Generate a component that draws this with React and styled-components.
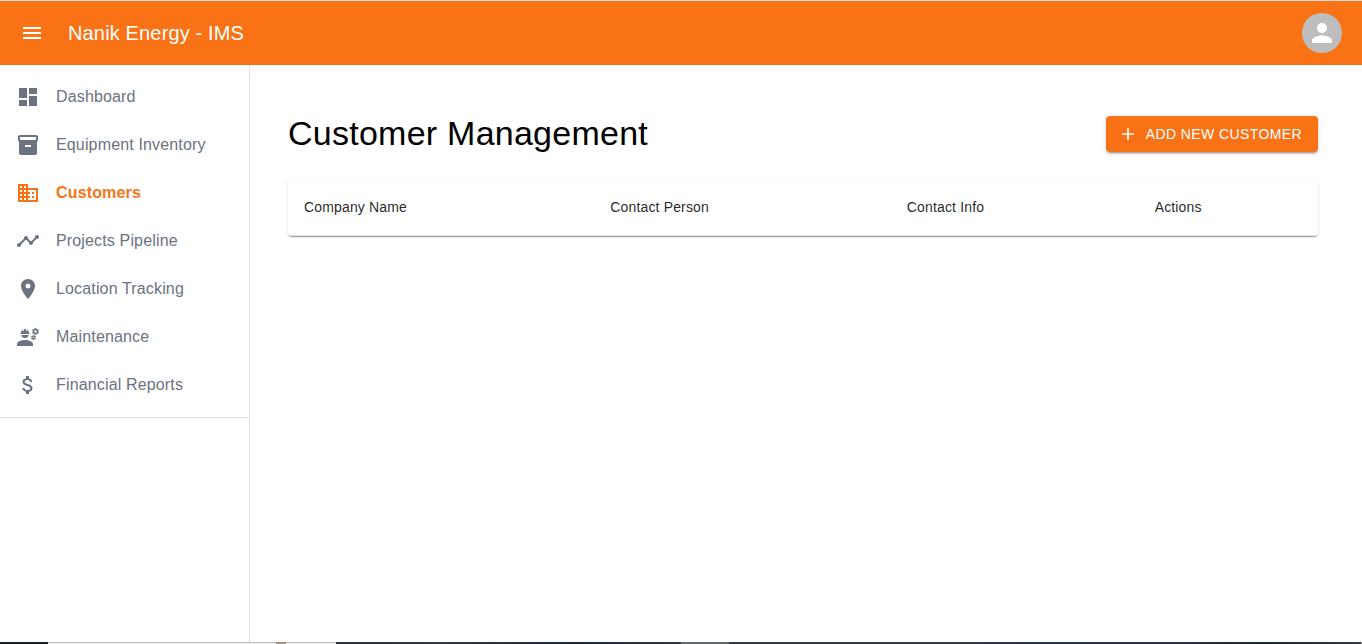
import React from "react";
import styled, { createGlobalStyle } from "styled-components";
import {
  MdMenu, MdDashboard, MdInventory2, MdBusiness, MdTimeline,
  MdLocationOn, MdEngineering, MdAttachMoney, MdPerson, MdAdd,
} from "react-icons/md";

const GlobalStyle = createGlobalStyle`
  *, *::before, *::after { box-sizing: border-box; }
  body {
    margin: 0;
    background: #fff;
    font-family: "Liberation Sans", Arial, sans-serif;
    overflow: hidden;
  }
`;

const Page = styled.div`
  display: flex;
  flex-direction: column;
  width: 100%;
  height: 100vh;
`;

const AppBar = styled.header`
  display: flex;
  align-items: center;
  height: 65px;
  flex: none;
  padding: 0 20px;
  color: #fff;
  background: #f97316;
  border-top: 1px solid #d5dadd;
`;

const MenuButton = styled.button`
  display: flex;
  padding: 0;
  border: 0;
  color: inherit;
  background: none;
  font-size: 24px;
`;

const Brand = styled.div`
  flex: 1;
  margin-left: 24px;
  font-size: 20px;
  line-height: 32px;
  letter-spacing: 0.0075em;
`;

const Avatar = styled.div`
  display: flex;
  align-items: center;
  justify-content: center;
  width: 40px;
  height: 40px;
  border-radius: 50%;
  background: #bdbdbd;
  font-size: 30px;
`;

const Body = styled.div`
  display: flex;
  flex: 1;
  min-height: 0;
`;

const Sidebar = styled.aside`
  width: 250px;
  flex: none;
  border-right: 1px solid #e0e0e0;
`;

const NavList = styled.nav`
  padding: 8px 0;
  border-bottom: 1px solid #e0e0e0;
`;

const NavItem = styled.a`
  display: flex;
  align-items: center;
  gap: 16px;
  height: 48px;
  padding: 0 16px;
  color: ${(p) => (p.$active ? "#f97316" : "#6b7280")};
  font-size: 16px;
  font-weight: ${(p) => (p.$active ? 700 : 400)};
  line-height: 24px;
  letter-spacing: 0.00938em;

  svg { font-size: 24px; flex: none; }
`;

const Main = styled.main`
  flex: 1;
  padding: 48px 44px 0 38px;
`;

const Heading = styled.div`
  display: flex;
  align-items: center;
  justify-content: space-between;
  height: 42px;
  margin-bottom: 24px;
`;

const Title = styled.h1`
  margin: 0;
  padding-bottom: 2px;
  color: #000;
  font-size: 34px;
  font-weight: 400;
  line-height: 42px;
  letter-spacing: 0.00735em;
`;

const AddButton = styled.button`
  display: flex;
  align-items: center;
  gap: 8px;
  height: 36.5px;
  padding: 0 16px 0 12px;
  border: 0;
  border-radius: 4px;
  color: #fff;
  background: #f97316;
  font: 500 14px/24.5px "Liberation Sans", Arial, sans-serif;
  letter-spacing: 0.02857em;
  text-transform: uppercase;
  box-shadow: 0 3px 1px -2px rgba(0, 0, 0, 0.2), 0 2px 2px rgba(0, 0, 0, 0.14), 0 1px 5px rgba(0, 0, 0, 0.12);

  svg { font-size: 20px; }
`;

const TableCard = styled.div`
  border-radius: 4px;
  overflow: hidden;
  box-shadow: 0 2px 1px -1px rgba(0, 0, 0, 0.2), 0 1px 1px rgba(0, 0, 0, 0.14), 0 1px 3px rgba(0, 0, 0, 0.12);
`;

const Table = styled.table`
  width: 100%;
  table-layout: fixed;
  border-collapse: separate;
  border-spacing: 0;
`;

const HeadCell = styled.th`
  width: ${(p) => p.$width};
  height: 57px;
  padding: 16px;
  border-bottom: 1px solid #e0e0e0;
  color: rgba(0, 0, 0, 0.87);
  font-size: 14px;
  font-weight: 400;
  line-height: 24px;
  letter-spacing: 0.01071em;
  text-align: left;
`;

const Dock = styled.footer`
  display: flex;
  flex: none;
  height: 2px;
`;

const DockPart = styled.div`
  width: ${(p) => p.$width};
  flex: ${(p) => (p.$width ? "none" : 1)};
  background: ${(p) => p.$fill};
`;

const navigation = [
  ["Dashboard", MdDashboard],
  ["Equipment Inventory", MdInventory2],
  ["Customers", MdBusiness],
  ["Projects Pipeline", MdTimeline],
  ["Location Tracking", MdLocationOn],
  ["Maintenance", MdEngineering],
  ["Financial Reports", MdAttachMoney],
];

const columns = [
  ["Company Name", "29.74%"],
  ["Contact Person", "28.79%"],
  ["Contact Info", "24.06%"],
  ["Actions", "17.41%"],
];

const lightEdge = "linear-gradient(#bdbdbd 50%, #eeeeee 50%)";

export default function App() {
  return (
    <Page>
      <GlobalStyle />
      <AppBar>
        <MenuButton aria-label="Menu"><MdMenu /></MenuButton>
        <Brand>Nanik Energy - IMS</Brand>
        <Avatar><MdPerson /></Avatar>
      </AppBar>
      <Body>
        <Sidebar>
          <NavList>
            {navigation.map(([label, Icon]) => (
              <NavItem key={label} $active={label === "Customers"}>
                <Icon />
                <span>{label}</span>
              </NavItem>
            ))}
          </NavList>
        </Sidebar>
        <Main>
          <Heading>
            <Title>Customer Management</Title>
            <AddButton><MdAdd />Add New Customer</AddButton>
          </Heading>
          <TableCard>
            <Table>
              <thead>
                <tr>
                  {columns.map(([label, width]) => (
                    <HeadCell key={label} $width={width}>{label}</HeadCell>
                  ))}
                </tr>
              </thead>
            </Table>
          </TableCard>
        </Main>
      </Body>
      <Dock>
        <DockPart $width="48px" $fill="#1c2023" />
        <DockPart $width="228px" $fill={lightEdge} />
        <DockPart $width="10px" $fill="#9b928c" />
        <DockPart $width="50px" $fill={lightEdge} />
        <DockPart $width="345px" $fill="linear-gradient(90deg, #29323f, #353847 30%, #1b2b3b 70%, #343746)" />
        <DockPart $width="48px" $fill="#65696d" />
        <DockPart $fill="linear-gradient(90deg, #373847, #393a49 35%, #26334a 50%, #2c3445 70%, #1b2936 85%, #383848)" />
        <DockPart $width="1px" $fill="#85868b" />
      </Dock>
    </Page>
  );
}
